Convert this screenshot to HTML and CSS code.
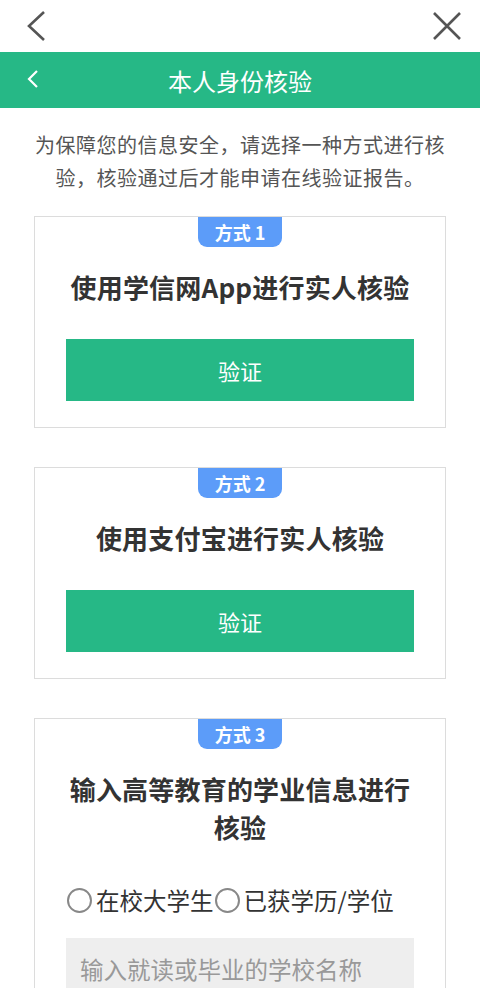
FILE: index.html
```html
<!DOCTYPE html>
<html>
<head>
  <meta charset="utf-8">
  <title>本人身份核验</title>
  <link rel="stylesheet" href="styles.css">
</head>
<body>
  <div class="topbar">
    <svg class="top-back" width="24" height="34" viewBox="0 0 24 34">
      <polyline points="19,3 4,17 19,31" fill="none" stroke="#555" stroke-width="2.6"/>
    </svg>
    <svg class="top-close" width="30" height="30" viewBox="0 0 30 30">
      <path d="M2 2 L28 28 M28 2 L2 28" stroke="#555" stroke-width="2.6"/>
    </svg>
  </div>

  <div class="header">
    <svg class="header-back" width="14" height="20" viewBox="0 0 14 20">
      <polyline points="11,2 3,10 11,18" fill="none" stroke="#fff" stroke-width="2.2"/>
    </svg>
    <h1>本人身份核验</h1>
  </div>

  <p class="intro">为保障您的信息安全，请选择一种方式进行核验，核验通过后才能申请在线验证报告。</p>

  <div class="card">
    <div class="badge">方式 1</div>
    <h2>使用学信网App进行实人核验</h2>
    <button type="button" class="verify">验证</button>
  </div>

  <div class="card">
    <div class="badge">方式 2</div>
    <h2>使用支付宝进行实人核验</h2>
    <button type="button" class="verify">验证</button>
  </div>

  <div class="card">
    <div class="badge">方式 3</div>
    <h2>输入高等教育的学业信息进行核验</h2>
    <div class="radios">
      <label><span class="circle"></span>在校大学生</label>
      <label><span class="circle"></span>已获学历/学位</label>
    </div>
    <div class="school-input">输入就读或毕业的学校名称</div>
  </div>
</body>
</html>
```

FILE: styles.css
```css
body {
  margin: 0;
  background-color: #ffffff;
  font-family: "Noto Sans CJK SC", "Noto Sans", sans-serif;
  color: #333333;
}

.topbar {
  height: 52px;
  display: flex;
  align-items: center;
  justify-content: space-between;
  padding: 0 18px 0 25px;
}

.header {
  height: 56px;
  background-color: #26b886; /* Green */
  display: flex;
  align-items: center;
  justify-content: center;
  position: relative;
}

.header-back {
  position: absolute;
  left: 26px;
  top: 17px;
}

.header h1 {
  margin: 2px 0 0;
  font-size: 24px;
  font-weight: normal;
  color: #ffffff;
  line-height: 56px;
}

.intro {
  margin: 20px 34px 22px;
  font-size: 20px;
  line-height: 33px;
  letter-spacing: 0.5px;
  color: #555555;
  text-align: center;
}

.card {
  margin: 0 34px 39px;
  border: 1px solid #dcdcdc;
  padding: 0 31px 26px;
  text-align: center;
}

.badge {
  width: 84px;
  height: 30px;
  margin: 0 auto;
  background-color: #5c9cf9; /* Blue */
  color: #ffffff;
  font-size: 18px;
  font-weight: bold;
  line-height: 30px;
  border-radius: 0 0 9px 9px;
}

.card h2 {
  margin: 21px 0 0;
  font-size: 26px;
  line-height: 38px;
  font-weight: bold;
  letter-spacing: 0.2px;
  color: #333333;
}

.verify {
  display: block;
  width: 100%;
  height: 62px;
  margin-top: 33px;
  border: none;
  background-color: #26b886;
  color: #ffffff;
  font-family: inherit;
  font-size: 22px;
  cursor: pointer;
}

.radios {
  display: flex;
  align-items: center;
  margin-top: 39px;
  height: 30px;
  font-size: 23.5px;
  color: #333333;
}

.radios label {
  display: flex;
  align-items: center;
}

.circle {
  display: inline-block;
  width: 21px;
  height: 21px;
  border: 2px solid #888888;
  border-radius: 50%;
  margin: 0 4px 0 1px;
}

.school-input {
  margin-top: 23px;
  height: 62px;
  background-color: #eeeeee;
  color: #999999;
  font-size: 23.5px;
  line-height: 62px;
  text-align: left;
  padding-left: 14px;
}
```
